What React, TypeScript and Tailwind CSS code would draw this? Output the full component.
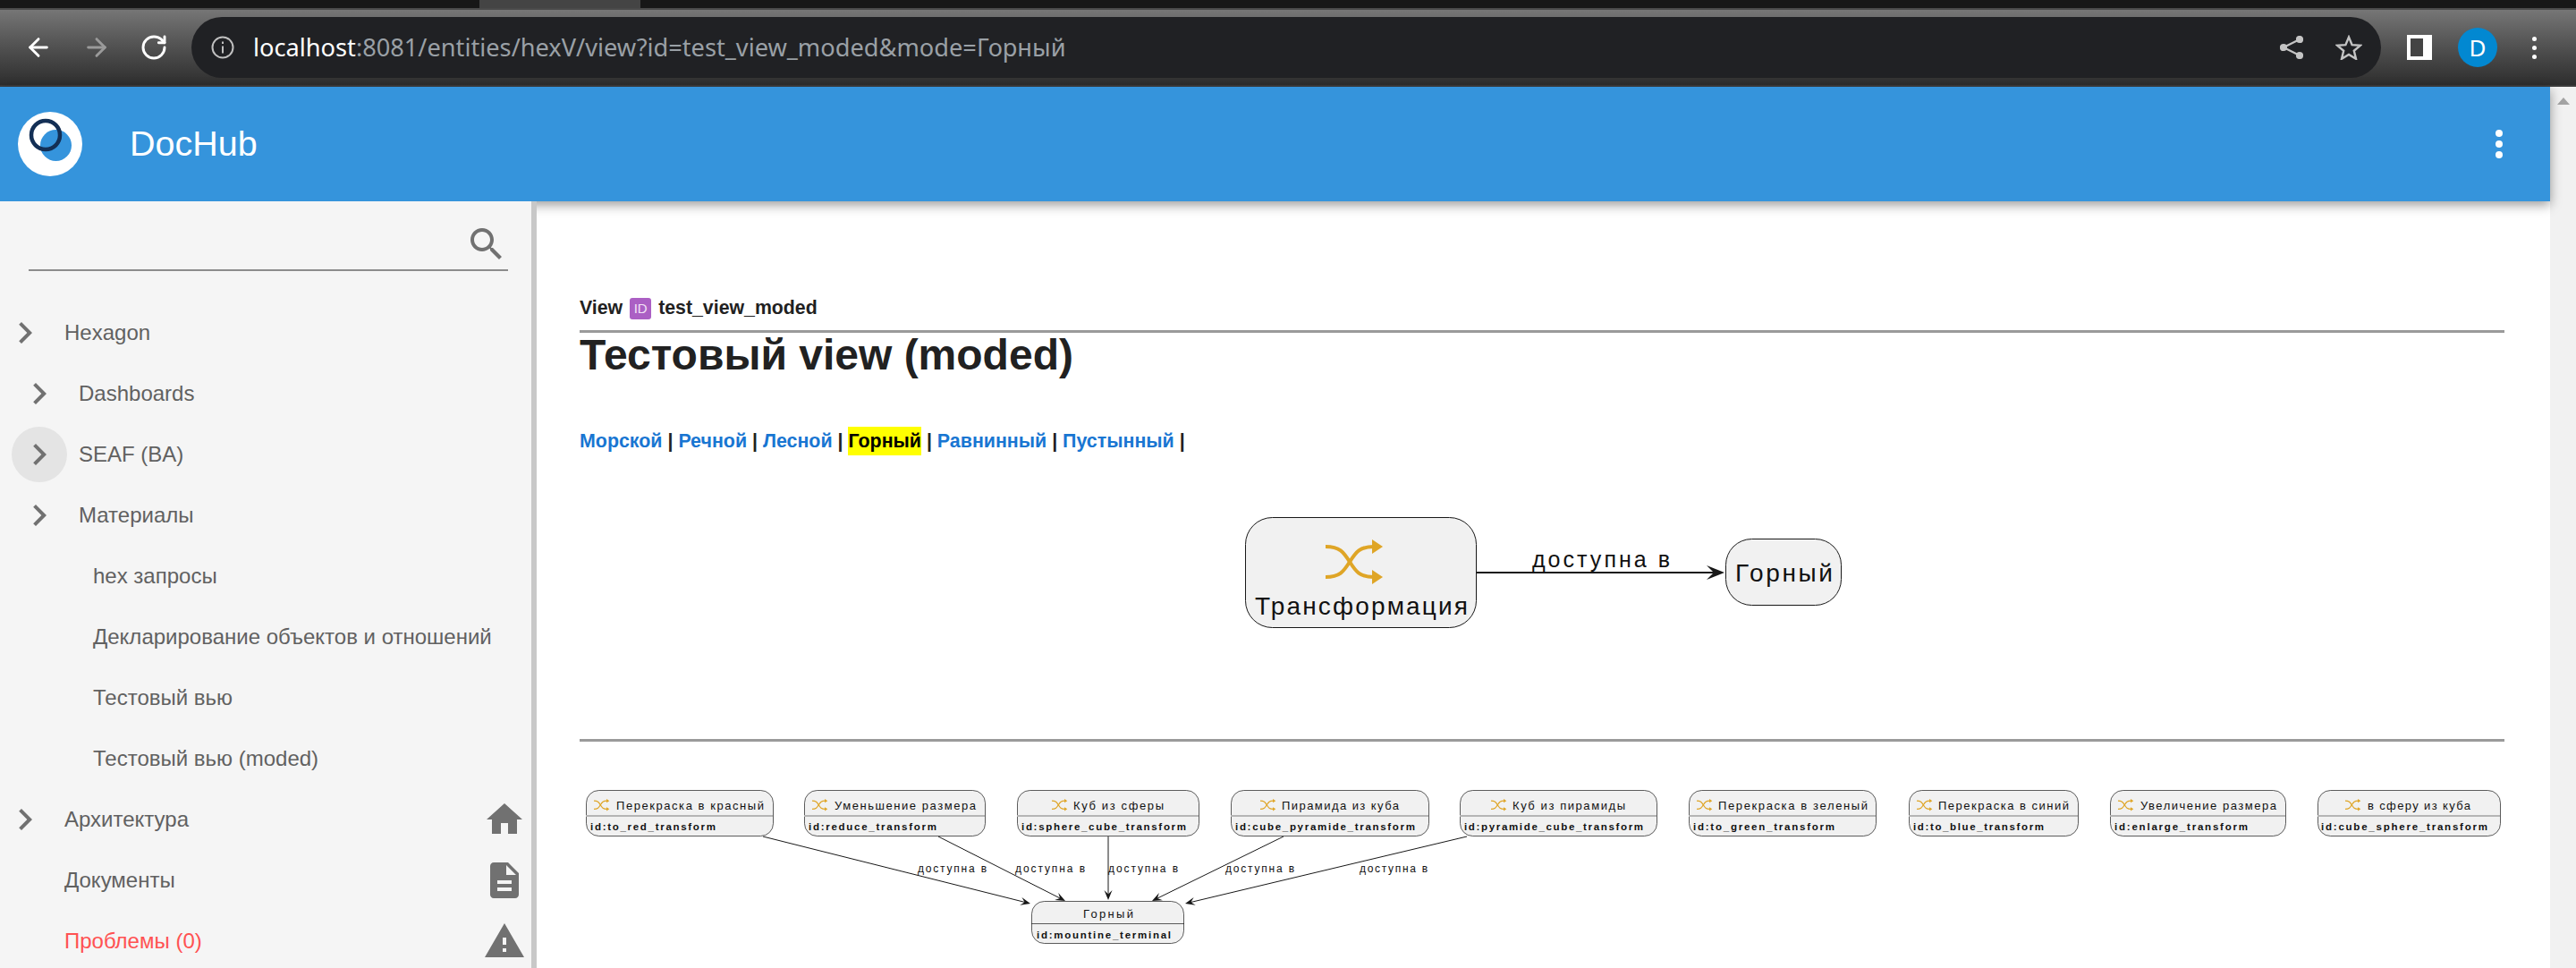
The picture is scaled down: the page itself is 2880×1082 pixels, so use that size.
import React from 'react';
import { ArrowLeft, ArrowRight, RotateCw } from 'lucide-react';

const CHEVRON = 'M10 6L8.59 7.41 13.17 12l-4.58 4.59L10 18l6-6z';
const SEARCH = 'M15.5 14h-.79l-.28-.27C15.41 12.59 16 11.11 16 9.5 16 5.91 13.09 3 9.5 3S3 5.91 3 9.5 5.91 16 9.5 16c1.61 0 3.09-.59 4.23-1.57l.27.28v.79l5 4.99L20.49 19l-4.99-5zm-6 0C7.01 14 5 11.99 5 9.5S7.01 5 9.5 5 14 7.01 14 9.5 11.99 14 9.5 14z';
const HOME = 'M10 20v-6h4v6h5v-8h3L12 3 2 12h3v8z';
const DOC = 'M14 2H6c-1.1 0-1.99.9-1.99 2L4 20c0 1.1.89 2 1.99 2H18c1.1 0 2-.9 2-2V8l-6-6zm2 16H8v-2h8v2zm0-4H8v-2h8v2zm-3-5V3.5L18.5 9H13z';
const WARNING = 'M1 21h22L12 2 1 21zm12-3h-2v-2h2v2zm0-4h-2v-4h2v4z';

const MdIcon: React.FC<{ d: string; className?: string }> = ({ d, className }) => (
  <svg viewBox="0 0 24 24" className={`w-12 h-12 shrink-0 fill-[#717171] ${className ?? ''}`}>
    <path d={d} />
  </svg>
);

interface NavItem {
  label: string;
  level: 0 | 1 | 2;
  chevron?: boolean;
  hover?: boolean;
  icon?: string;
  red?: boolean;
}

const nav: NavItem[] = [
  { label: 'Hexagon', level: 0, chevron: true },
  { label: 'Dashboards', level: 1, chevron: true },
  { label: 'SEAF (BA)', level: 1, chevron: true, hover: true },
  { label: 'Материалы', level: 1, chevron: true },
  { label: 'hex запросы', level: 2 },
  { label: 'Декларирование объектов и отношений', level: 2 },
  { label: 'Тестовый вью', level: 2 },
  { label: 'Тестовый вью (moded)', level: 2 },
  { label: 'Архитектура', level: 0, chevron: true, icon: HOME },
  { label: 'Документы', level: 0, icon: DOC },
  { label: 'Проблемы (0)', level: 0, icon: WARNING, red: true },
];

const NavRow: React.FC<{ item: NavItem }> = ({ item }) => {
  const pad = item.level === 2 ? 'pl-[104px]' : item.chevron ? (item.level === 1 ? 'pl-[20px]' : 'pl-[4px]') : 'pl-[72px]';
  return (
    <div className={`flex items-center h-[68px] shrink-0 pr-[6px] ${pad}`}>
      {item.chevron && (
        <div className="relative w-12 h-12 mr-[20px] shrink-0">
          {item.hover && <div className="absolute -left-[7px] -top-[7px] w-[62px] h-[62px] rounded-full bg-[#e4e4e4]" />}
          <MdIcon d={CHEVRON} className="relative" />
        </div>
      )}
      <span className={`flex-1 text-[24px] leading-[32px] whitespace-nowrap ${item.red ? 'text-[#ff5252]' : 'text-[#616161]'}`}>{item.label}</span>
      {item.icon && <MdIcon d={item.icon} />}
    </div>
  );
};

const Shuffle: React.FC<{ x: number; y: number; scale: number; sw: number }> = ({ x, y, scale, sw }) => (
  <g transform={`translate(${x} ${y}) scale(${scale})`}>
    <path d="M0 8C16 8 20 14 27 25C34 36 38 42 54 42" fill="none" stroke="#dfa526" strokeWidth={sw} />
    <path d="M0 42C16 42 20 36 27 25C34 14 38 8 54 8" fill="none" stroke="#dfa526" strokeWidth={sw} />
    <polygon points="52,0 64,8 52,16" fill="#dfa526" />
    <polygon points="52,34 64,42 52,50" fill="#dfa526" />
  </g>
);

const Arrow: React.FC<{ x1: number; y1: number; x2: number; y2: number; len: number; half: number; sw: number }> = ({ x1, y1, x2, y2, len, half, sw }) => {
  const d = Math.hypot(x2 - x1, y2 - y1);
  const ux = (x2 - x1) / d;
  const uy = (y2 - y1) / d;
  const pt = (back: number, side: number) => `${x2 - ux * back - uy * side},${y2 - uy * back + ux * side}`;
  return (
    <g>
      <line x1={x1} y1={y1} x2={x2 - ux * len * 0.5} y2={y2 - uy * len * 0.5} stroke="#181818" strokeWidth={sw} />
      <polygon points={`${pt(0, 0)} ${pt(len, half)} ${pt(len * 0.6, 0)} ${pt(len, -half)}`} fill="#181818" />
    </g>
  );
};

const DText: React.FC<{ x: number; end: number; y: number; size: number; bold?: boolean; children: string }> = ({ x, end, y, size, bold, children }) => (
  <text
    x={x}
    y={y}
    fontSize={size}
    textLength={end - x}
    lengthAdjust="spacing"
    dominantBaseline="central"
    fill="#111"
    className={`font-['Liberation_Sans',sans-serif] ${bold ? 'font-bold' : ''}`}
  >
    {children}
  </text>
);

interface Transform {
  x1: number; x2: number; icon: number; tx: number; te: number; ix: number; ie: number; title: string; id: string;
}

const transforms: Transform[] = [
  { x1: 655, x2: 864, icon: 664, tx: 689, te: 854, ix: 660, ie: 800, title: 'Перекраска в красный', id: 'id:to_red_transform' },
  { x1: 899, x2: 1101, icon: 908, tx: 933, te: 1091, ix: 904, ie: 1047, title: 'Уменьшение размера', id: 'id:reduce_transform' },
  { x1: 1137, x2: 1340, icon: 1176, tx: 1200, te: 1301, ix: 1142, ie: 1326, title: 'Куб из сферы', id: 'id:sphere_cube_transform' },
  { x1: 1376, x2: 1597, icon: 1409, tx: 1433, te: 1564, ix: 1381, ie: 1582, title: 'Пирамида из куба', id: 'id:cube_pyramide_transform' },
  { x1: 1632, x2: 1852, icon: 1667, tx: 1691, te: 1817, ix: 1637, ie: 1837, title: 'Куб из пирамиды', id: 'id:pyramide_cube_transform' },
  { x1: 1888, x2: 2097, icon: 1897, tx: 1921, te: 2088, ix: 1893, ie: 2051, title: 'Перекраска в зеленый', id: 'id:to_green_transform' },
  { x1: 2134, x2: 2323, icon: 2143, tx: 2167, te: 2313, ix: 2139, ie: 2285, title: 'Перекраска в синий', id: 'id:to_blue_transform' },
  { x1: 2359, x2: 2555, icon: 2368, tx: 2393, te: 2545, ix: 2364, ie: 2513, title: 'Увеличение размера', id: 'id:enlarge_transform' },
  { x1: 2591, x2: 2795, icon: 2622, tx: 2647, te: 2762, ix: 2595, ie: 2781, title: 'в сферу из куба', id: 'id:cube_sphere_transform' },
];

const edges = [
  { x1: 853, x2: 1152, y2: 1011, lx: 1026, le: 1103 },
  { x1: 1049, x2: 1191, y2: 1008, lx: 1135, le: 1213 },
  { x1: 1239, x2: 1239, y2: 1007, lx: 1239, le: 1317 },
  { x1: 1435, x2: 1288, y2: 1008, lx: 1370, le: 1447 },
  { x1: 1640, x2: 1325, y2: 1011, lx: 1520, le: 1596 },
];

const links = ['Морской', 'Речной', 'Лесной', 'Горный', 'Равнинный', 'Пустынный'];

const App: React.FC = () => {
  return (
    <div className="w-[2880px] h-[1082px] overflow-hidden flex flex-col bg-white font-['Liberation_Sans',sans-serif]">
      {/* browser tab strip */}
      <div className="h-[9px] shrink-0 bg-[#171717] flex">
        <div className="ml-[536px] w-[180px] h-full bg-[#444444]" />
      </div>
      <div className="h-[2px] shrink-0 bg-[#4a4a4a]" />

      {/* browser toolbar */}
      <div className="h-[86px] shrink-0 flex items-center bg-gradient-to-b from-[#767676] to-[#2e2e2e] border-b-2 border-[#3d3d3d]">
        <ArrowLeft className="ml-[27px] w-8 h-8 text-white" strokeWidth={2.2} />
        <ArrowRight className="ml-[33px] w-8 h-8 text-[#9a9a9a]" strokeWidth={2.2} />
        <RotateCw className="ml-[32px] w-8 h-8 text-white" strokeWidth={2.2} />
        <div className="ml-[26px] w-[2448px] h-[68px] rounded-[34px] bg-[#202124] flex items-center">
          <svg viewBox="0 0 26 26" className="ml-[22px] w-[26px] h-[26px] fill-none stroke-[#c0c0c0]" strokeWidth={2}>
            <circle cx="13" cy="13" r="11.5" />
            <path d="M13 11.5v8M13 6.5v2.5" />
          </svg>
          <span className="ml-[21px] text-[27.2px] font-['Noto_Sans',sans-serif] whitespace-nowrap text-[#9aa0a6]">
            <span className="text-white">localhost</span>:8081/entities/hexV/view?id=test_view_moded&amp;mode=Горный
          </span>
          <div className="flex-1" />
          <svg viewBox="0 0 26 26" className="w-[26px] h-[26px] fill-[#c4c4c4] stroke-[#c4c4c4]" strokeWidth={2.2}>
            <path d="M22 4L4 13l18 9" fill="none" />
            <circle cx="22" cy="4" r="3" />
            <circle cx="4" cy="13" r="3" />
            <circle cx="22" cy="22" r="3" />
          </svg>
          <svg viewBox="0 0 30 28" className="ml-[36px] mr-[21px] w-[30px] h-[28px] fill-none stroke-[#c4c4c4]" strokeWidth={2.4}>
            <path d="M15 2.5l3.6 8.6 9.2.7-7 6 2.2 9-8-4.8-8 4.8 2.2-9-7-6 9.2-.7z" />
          </svg>
        </div>
        <div className="ml-[29px] w-[28px] h-[28px] bg-white pl-[4px] py-[4px] shrink-0">
          <div className="w-[14px] h-[20px] bg-[#444]" />
        </div>
        <div className="ml-[29px] w-[44px] h-[44px] rounded-full bg-[#0288d1] text-white text-[26px] flex items-center justify-center font-['Noto_Sans',sans-serif] shrink-0">D</div>
        <div className="ml-[39px] flex flex-col gap-[5px] shrink-0">
          <div className="w-[5px] h-[5px] rounded-full bg-white" />
          <div className="w-[5px] h-[5px] rounded-full bg-white" />
          <div className="w-[5px] h-[5px] rounded-full bg-white" />
        </div>
      </div>

      <div className="flex-1 flex min-h-0">
        <div className="flex-1 flex flex-col min-w-0">
          {/* app bar */}
          <header className="relative z-10 h-[128px] shrink-0 bg-[#3594dc] flex items-center shadow-[0_4px_12px_rgba(0,0,0,0.4)]">
            <svg viewBox="0 0 72 72" className="ml-[20px] w-[72px] h-[72px] shrink-0">
              <circle cx="36" cy="36" r="36" fill="#fff" />
              <circle cx="42.5" cy="37.5" r="17.5" fill="#3594dc" />
              <circle cx="31" cy="26" r="16" fill="none" stroke="#132f55" strokeWidth="4.5" />
            </svg>
            <span className="ml-[53px] text-[39.5px] text-white font-['Liberation_Sans',sans-serif]">DocHub</span>
            <div className="flex-1" />
            <div className="mr-[53px] flex flex-col gap-[4px]">
              <div className="w-2 h-2 rounded-full bg-white" />
              <div className="w-2 h-2 rounded-full bg-white" />
              <div className="w-2 h-2 rounded-full bg-white" />
            </div>
          </header>

          <div className="flex-1 flex min-h-0">
            {/* sidebar */}
            <aside className="relative z-20 w-[600px] shrink-0 bg-[#f5f5f5] border-r-[6px] border-[#c8c8c8] flex flex-col overflow-hidden">
              <div className="ml-[32px] mt-[24px] mb-[35px] w-[536px] h-[54px] shrink-0 flex justify-end border-b-2 border-[#8c8c8c]">
                <MdIcon d={SEARCH} />
              </div>
              {nav.map((item) => (
                <NavRow key={item.label} item={item} />
              ))}
            </aside>

            {/* content */}
            <main className="flex-1 min-w-0 bg-white overflow-hidden pl-[48px] pr-[51px] pt-[104px] text-[#212121]">
              <div className="flex items-center h-[32px] text-[21.3px] font-bold whitespace-nowrap">
                <span>View</span>
                <span className="ml-[8px] w-[24px] h-[24px] rounded-[3px] bg-[#ab5fc4] text-[#f3e3f7] text-[15px] font-normal flex items-center justify-center">ID</span>
                <span className="ml-[8px]">test_view_moded</span>
              </div>
              <div className="mt-[8px] h-[3px] bg-[#9a9a9a]" />
              <h1 className="text-[48px] leading-[50px] font-bold whitespace-nowrap">Тестовый view (moded)</h1>
              <div className="mt-[55px] h-[32px] flex items-center text-[21.4px] font-bold whitespace-pre">
                {links.map((l) => (
                  <React.Fragment key={l}>
                    {l === 'Горный' ? (
                      <span className="bg-[#ffff00] text-black">{l}</span>
                    ) : (
                      <span className="text-[#1976d2]">{l}</span>
                    )}
                    <span>{' | '}</span>
                  </React.Fragment>
                ))}
              </div>

              <svg viewBox="648 560 2152 160" className="mt-[51px] block w-[2152px] h-[160px]">
                <rect x="1392.5" y="578.5" width="258" height="123" rx="30" fill="#f1f1f1" stroke="#181818" strokeWidth="1" />
                <Shuffle x={1482} y={603} scale={1} sw={4} />
                <DText x={1403} end={1641} y={677} size={28}>Трансформация</DText>
                <Arrow x1={1651} y1={640} x2={1928} y2={640} len={20} half={8} sw={2} />
                <DText x={1713} end={1867} y={625} size={25}>доступна в</DText>
                <rect x="1929.5" y="602.5" width="129" height="74" rx="29" fill="#f1f1f1" stroke="#181818" strokeWidth="1" />
                <DText x={1940} end={2049} y={640} size={28}>Горный</DText>
              </svg>

              <div className="mt-[106px] h-[3px] bg-[#9a9a9a]" />

              <svg viewBox="648 830 2152 252" className="block w-[2152px] h-[252px]">
                {edges.map((e) => (
                  <g key={e.lx}>
                    <Arrow x1={e.x1} y1={936} x2={e.x2} y2={e.y2} len={11} half={4.5} sw={1} />
                    <DText x={e.lx} end={e.le} y={972} size={12}>доступна в</DText>
                  </g>
                ))}
                {transforms.map((t) => (
                  <g key={t.id}>
                    <rect x={t.x1 + 0.5} y="884.5" width={t.x2 - t.x1} height="51" rx="14" fill="#f1f1f1" stroke="#181818" strokeWidth="0.7" />
                    <line x1={t.x1} x2={t.x2} y1="913" y2="913" stroke="#b5b5b5" strokeWidth="2" />
                    <Shuffle x={t.icon} y={894} scale={0.27} sw={4.5} />
                    <DText x={t.tx} end={t.te} y={901} size={13}>{t.title}</DText>
                    <DText x={t.ix} end={t.ie} y={924.5} size={11.5} bold>{t.id}</DText>
                  </g>
                ))}
                <rect x="1153.5" y="1008.5" width="170" height="47" rx="14" fill="#f1f1f1" stroke="#181818" strokeWidth="0.7" />
                <line x1="1153" x2="1324" y1="1033.5" y2="1033.5" stroke="#181818" strokeWidth="0.7" />
                <DText x={1211} end={1267} y={1022} size={13}>Горный</DText>
                <DText x={1159} end={1309} y={1045.5} size={11.5} bold>id:mountine_terminal</DText>
              </svg>
            </main>
          </div>
        </div>

        {/* page scrollbar */}
        <div className="w-[29px] shrink-0 bg-[#f1f1f1] flex justify-center pt-[12px]">
          <div className="w-0 h-0 border-x-[7px] border-x-transparent border-b-[8px] border-b-[#a3a3a3]" />
        </div>
      </div>
    </div>
  );
};

export default App;
